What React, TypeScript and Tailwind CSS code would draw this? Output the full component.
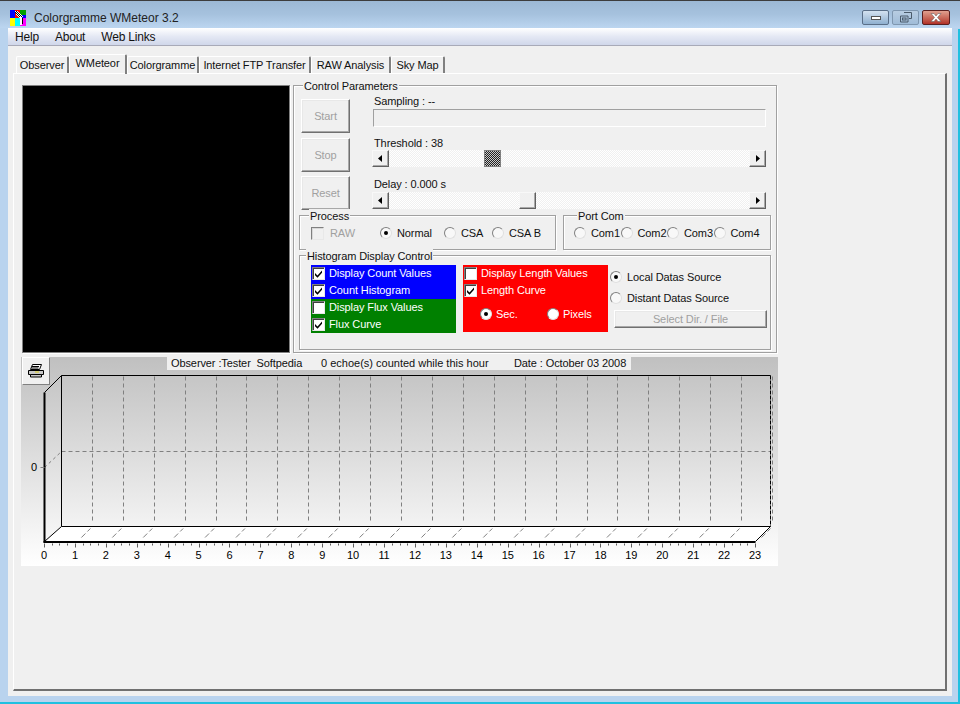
import React from "react";

const Check = ({ on, disabled, className = "" }: { on?: boolean; disabled?: boolean; className?: string }) => (
  <span className={`relative block w-[13px] h-[13px] shrink-0 border border-t-[#808080] border-l-[#808080] border-r-[#e8e8e8] border-b-[#e8e8e8] shadow-[inset_1px_1px_0_#404040] ${disabled ? "bg-[#f0f0f0] shadow-[inset_1px_1px_0_#d8d8d8]" : "bg-white"} ${className}`}>
    {on && (
      <svg viewBox="0 0 13 13" className="absolute -left-px -top-px w-[13px] h-[13px]">
        <path d="M3 6l2.500 2.500L10 3.500v2.200L5.500 10.800 3 8.300z" fill="#000" />
      </svg>
    )}
  </span>
);

const Radio = ({ on, white, className = "" }: { on?: boolean; white?: boolean; className?: string }) => (
  <span className={`relative flex items-center justify-center w-[12px] h-[12px] shrink-0 rounded-full border border-t-[#808080] border-l-[#808080] border-r-[#e0e0e0] border-b-[#e0e0e0] ${white ? "bg-white" : "bg-[#f8f8f8]"} ${className}`}>
    {on && <span className="block w-[4px] h-[4px] rounded-full bg-black" />}
  </span>
);

const Group = ({ title, legendLeft, className, children }: { title: string; legendLeft: string; className: string; children?: React.ReactNode }) => (
  <div className={`relative border border-[#a0a0a0] shadow-[inset_1px_1px_0_#fff,1px_1px_0_#fff] ${className}`}>
    <span className={`absolute -top-[7px] ${legendLeft} bg-[#f0f0f0] px-[1px] leading-[14px] text-[#111]`}>{title}</span>
    {children}
  </div>
);

const Btn3D = ({ label, className }: { label: string; className: string }) => (
  <div className={`flex items-center justify-center bg-[#f0f0f0] border border-t-white border-l-white border-r-[#707070] border-b-[#707070] shadow-[inset_-1px_-1px_0_#a8a8a8,inset_1px_1px_0_#e8e8e8] text-[#a0a0a0] ${className}`}>
    {label}
  </div>
);

const Arrow = ({ dir }: { dir: "l" | "r" }) => (
  <div className="w-[17px] h-[17px] flex items-center justify-center bg-[#f0f0f0] border border-t-[#f8f8f8] border-l-[#f8f8f8] border-r-[#606060] border-b-[#606060] shadow-[inset_-1px_-1px_0_#a8a8a8]">
    <svg viewBox="0 0 5 7" className="w-[5px] h-[7px]">
      <path d={dir === "l" ? "M4 0v7L0 3.500z" : "M1 0v7l4-3.500z"} fill="#000" />
    </svg>
  </div>
);

const Scroll = ({ pos, dark }: { pos: string; dark?: boolean }) => (
  <div className="relative flex justify-between w-[394px] h-[17px] bg-[repeating-conic-gradient(#f0f0f0_0_25%,#ffffff_0_50%)] bg-[length:2px_2px]">
    <Arrow dir="l" />
    <div className={`absolute top-0 ${pos} w-[17px] h-[17px] border ${dark ? "bg-[repeating-conic-gradient(#222222_0_25%,#c8c8c8_0_50%)] bg-[length:2px_2px] border-[#808080]" : "bg-[#f0f0f0] border-t-[#f8f8f8] border-l-[#f8f8f8] border-r-[#606060] border-b-[#606060] shadow-[inset_-1px_-1px_0_#a8a8a8]"}`} />
    <Arrow dir="r" />
  </div>
);

const Row = ({ on, label, bg }: { on?: boolean; label: string; bg: string }) => (
  <div className={`flex items-center h-[17px] pl-[1px] ${bg} text-white`}>
    <Check on={on} />
    <span className="ml-[4px]">{label}</span>
  </div>
);

const tabs = [
  { t: "Observer", w: "w-[53px]" },
  { t: "WMeteor", w: "w-[58px]" },
  { t: "Colorgramme", w: "w-[72px]" },
  { t: "Internet FTP Transfer", w: "w-[112px]" },
  { t: "RAW Analysis", w: "w-[80px]" },
  { t: "Sky Map", w: "w-[54px]" },
];

const Logo = () => (
  <svg viewBox="0 0 16 16" className="w-[16px] h-[16px] shrink-0" shapeRendering="crispEdges">
    <rect width="16" height="16" fill="#0000ff" />
    <rect x="5" y="0" width="5" height="8" fill="#ff0000" />
    <rect x="10" y="0" width="6" height="5" fill="#00a000" />
    <rect x="0" y="8" width="5" height="8" fill="#ffff00" />
    <rect x="5" y="8" width="5" height="8" fill="#00ffff" />
    <rect x="10" y="8" width="6" height="8" fill="#ff00ff" />
    {[[5, 1], [7, 1], [6, 2], [8, 2], [7, 3], [9, 3], [6, 4], [8, 4], [10, 4], [7, 5], [9, 5], [11, 5], [8, 6], [10, 6], [12, 6], [9, 7], [11, 7]].map(([x, y], i) => (
      <rect key={i} x={x} y={y} width="1" height="1" fill="#fff" />
    ))}
    {[[6, 1], [5, 2], [7, 2], [6, 3], [8, 3], [7, 4], [9, 4], [8, 5], [10, 5], [9, 6], [11, 6]].map(([x, y], i) => (
      <rect key={i} x={x} y={y} width="1" height="1" fill="#000" />
    ))}
    <rect x="10" y="7" width="2" height="8" fill="#fff" />
    <rect x="12" y="8" width="1" height="6" fill="#000" />
  </svg>
);

const Chart = () => {
  const ox = 21, oy = 357;
  const X = (x: number) => x - ox + 0.5;
  const Y = (y: number) => y - oy + 0.5;
  const step = (755 - 44) / 23;
  const hours = Array.from({ length: 24 }, (_, i) => i);
  return (
    <div className="relative w-[757px] h-[209px] bg-gradient-to-b from-[#c0c0c0] to-white">
      <svg className="absolute inset-0 w-[757px] h-[209px]" viewBox="0 0 757 209" fontFamily="'Liberation Sans', sans-serif" fontSize="11">
        <path d={`M${X(61)} ${Y(526)}H${X(770)}L${X(755)} ${Y(542)}H${X(44)}Z`} fill="#fff" />
        {hours.slice(1).map((i) => (
          <line key={i} x1={X(Math.round(61 + step * i))} x2={X(Math.round(61 + step * i))} y1={Y(376)} y2={Y(523)} stroke="#808080" strokeDasharray="4 3" />
        ))}
        <line x1={X(61)} x2={X(770)} y1={Y(451)} y2={Y(451)} stroke="#808080" strokeDasharray="4 3" />
        <line x1={X(44)} x2={X(61)} y1={Y(467)} y2={Y(451)} stroke="#808080" strokeDasharray="3 3" />
        {hours.slice(1).map((i) => (
          <g key={i}>
            <line x1={X(44 + step * i + 6)} y1={Y(537)} x2={X(44 + step * i + 10)} y2={Y(533)} stroke="#808080" />
            <line x1={X(44 + step * i + 12)} y1={Y(531)} x2={X(44 + step * i + 15)} y2={Y(528)} stroke="#808080" />
          </g>
        ))}
        <line x1={X(61)} x2={X(770)} y1={Y(375)} y2={Y(375)} stroke="#000" />
        <line x1={X(61)} x2={X(61)} y1={Y(375)} y2={Y(526)} stroke="#000" />
        <line x1={X(770)} x2={X(770)} y1={Y(375)} y2={Y(526)} stroke="#000" strokeDasharray="4 1" />
        <line x1={X(61)} x2={X(770)} y1={Y(526)} y2={Y(526)} stroke="#000" />
        <line x1={X(44)} x2={X(61)} y1={Y(392)} y2={Y(375)} stroke="#000" />
        <line x1={X(44)} x2={X(61)} y1={Y(541)} y2={Y(526)} stroke="#000" />
        <line x1={X(755)} x2={X(770)} y1={Y(541)} y2={Y(526)} stroke="#000" />
        <line x1={X(44)} x2={X(44)} y1={Y(392)} y2={Y(542)} stroke="#000" strokeWidth="2" />
        <line x1={X(43)} x2={X(755)} y1={Y(541.5)} y2={Y(541.5)} stroke="#000" strokeWidth="2" />
        <line x1={X(40)} x2={X(44)} y1={Y(467)} y2={Y(467)} stroke="#808080" />
        {hours.map((i) => (
          <g key={i}>
            <line x1={X(Math.round(44 + step * i))} x2={X(Math.round(44 + step * i))} y1={Y(543)} y2={Y(547)} stroke="#606060" />
            {i < 23 && [0.25, 0.5, 0.75].map((f) => (
              <line key={f} x1={X(Math.round(44 + step * (i + f)))} x2={X(Math.round(44 + step * (i + f)))} y1={Y(543)} y2={Y(545)} stroke="#606060" />
            ))}
            <text x={44 + step * i - ox} y={559 - oy} textAnchor="middle" fill="#000">{i}</text>
          </g>
        ))}
        <text x={34 - ox} y={471 - oy} textAnchor="middle" fill="#000">0</text>
      </svg>
      <div className="absolute left-[1px] top-0 w-[28px] h-[28px] flex items-center justify-center bg-[#f0f0f0] border border-t-white border-l-white border-r-[#808080] border-b-[#808080]">
        <svg viewBox="0 0 18 16" className="w-[18px] h-[16px]">
          <path d="M5.500 1.500h9l-2 5h-9z" fill="#fff" stroke="#000" />
          <path d="M1.500 7.500h15v4h-2v2.500h-11V11.500h-2z" fill="#c8c8c8" stroke="#000" />
          <path d="M3.500 11.500h11M5 3.500h7M4.500 5h7" stroke="#000" />
          <rect x="8" y="8.500" width="4" height="1" fill="#e0d020" />
        </svg>
      </div>
      <div className="absolute left-[146px] top-0 w-[464px] h-[13px] bg-[#f0f0f0] flex items-center pl-[4px] whitespace-pre text-[#111]">
        <span className="w-[150px]">Observer :Tester  Softpedia</span>
        <span className="w-[194px] tracking-normal">0 echoe(s) counted while this hour</span>
        <span className="-ml-[1px]">Date : October 03 2008</span>
      </div>
    </div>
  );
};

export default function App() {
  return (
    <div className="relative flex flex-col w-[960px] h-[704px] overflow-hidden bg-[#b9d3ee] font-['Liberation_Sans',sans-serif] text-[11px] tracking-[-0.1px] text-[#111] border-t border-t-[#3c3c3c]">
      {/* title bar */}
      <div className="flex items-center h-[27px] shrink-0 pt-[6px] pl-[10px] pr-[10px] bg-gradient-to-b from-[#9cb8d4] via-[#a6c2de] to-[#bcd6f0]">
        <Logo />
        <span className="ml-[8px] text-[12px] tracking-normal text-[#222]">Colorgramme WMeteor 3.2</span>
        <div className="ml-auto flex gap-[3px]">
          <div className="w-[27px] h-[15px] flex items-center justify-center rounded-[2px] border border-[#5a6f88] bg-gradient-to-b from-[#d4e2f0] to-[#8fb0d0]">
            <span className="block w-[10px] h-[4px] bg-white border border-[#555]" />
          </div>
          <div className="w-[27px] h-[15px] flex items-center justify-center rounded-[2px] border border-[#7f97b0] bg-gradient-to-b from-[#b8cde2] to-[#a0bcd8]">
            <svg viewBox="0 0 12 11" className="w-[12px] h-[11px]">
              <path d="M4 .5h7.500v6H9M.5 4h7.500v6H.5z" fill="none" stroke="#4a5a6a" />
              <rect x="2.500" y="6" width="3.500" height="2" fill="none" stroke="#4a5a6a" />
            </svg>
          </div>
          <div className="w-[28px] h-[15px] flex items-center justify-center rounded-[2px] border border-[#5a2020] bg-gradient-to-b from-[#e0a090] to-[#b03028]">
            <svg viewBox="0 0 12 9" className="w-[12px] h-[9px]">
              <path d="M1 .5h3L6 3 8 .5h3L7.500 4.500 11 8.500H8L6 6 4 8.500H1L4.500 4.500z" fill="#fff" stroke="#555" strokeWidth=".5" />
            </svg>
          </div>
        </div>
      </div>

      <div className="flex-1 flex flex-col ml-[8px] mr-[8px] mb-[8px] bg-[#f0f0f0]">
        {/* menu */}
        <div className="flex items-center h-[18px] shrink-0 pt-[1px] pl-[7px] gap-[16px] text-[12px] tracking-[-0.2px] bg-gradient-to-b from-white via-[#e4e8f4] to-[#d0d7ea] border-b border-b-[#a8aab8]">
          <span>Help</span>
          <span>About</span>
          <span>Web Links</span>
        </div>

        {/* tabs */}
        <div className="flex items-end h-[28px] shrink-0 pl-[8px]">
          {tabs.map((t, i) => (
            <div
              key={t.t}
              className={`flex items-center justify-center whitespace-nowrap border-t border-l border-t-white border-l-white border-r-2 border-r-[#808080] rounded-t-[2px] ${t.w} ${i === 1 ? "h-[20px] pb-[2px] relative z-10" : "h-[18px]"}`}
            >
              {t.t}
            </div>
          ))}
        </div>

        {/* tab page */}
        <div className="flex-1 ml-[5px] mr-[5px] mb-[5px] pl-[8px] pt-[11px] border border-t-white border-l-white border-r-2 border-b-2 border-r-[#707070] border-b-[#707070] -mt-[1px]">
          <div className="flex h-[272px]">
            <div className="w-[268px] h-[268px] bg-black border border-[#808080] shadow-[1px_1px_0_#fff]" />
            <Group title="Control Parameters" legendLeft="left-[9px]" className="ml-[3px] w-[484px] h-[268px]">
              <div className="flex pl-[7px] pt-[13px]">
                <div className="flex flex-col gap-[5px] w-[49px]">
                  <Btn3D label="Start" className="h-[34px]" />
                  <Btn3D label="Stop" className="h-[34px]" />
                  <Btn3D label="Reset" className="h-[34px] -mt-[1px]" />
                </div>
                <div className="ml-[22px] -mt-[5px] flex flex-col">
                  <span className="ml-[2px] leading-[14px] h-[15px]">Sampling : --</span>
                  <div className="ml-[1px] w-[393px] h-[18px] bg-[#f0f0f0] border border-t-[#a0a0a0] border-l-[#a0a0a0] border-r-white border-b-white" />
                  <span className="ml-[2px] mt-[9px] leading-[14px] h-[14px]">Threshold : 38</span>
                  <Scroll pos="left-[112px]" dark />
                  <span className="ml-[2px] mt-[10px] leading-[14px] h-[15px]">Delay : 0.000 s</span>
                  <Scroll pos="left-[147px]" />
                </div>
              </div>
              <div className="flex ml-[5px] mt-[5px] gap-[7px]">
                <Group title="Process" legendLeft="left-[9px]" className="w-[257px] h-[35px]">
                  <div className="flex items-center h-full pl-[11px] pt-[1px]">
                    <Check disabled />
                    <span className="ml-[6px] w-[50px] text-[#a0a0a0]">RAW</span>
                    <Radio on />
                    <span className="ml-[5px] w-[47px]">Normal</span>
                    <Radio />
                    <span className="ml-[5px] w-[31px]">CSA</span>
                    <Radio />
                    <span className="ml-[5px]">CSA B</span>
                  </div>
                </Group>
                <Group title="Port Com" legendLeft="left-[13px]" className="w-[208px] h-[35px]">
                  <div className="flex items-center h-full pl-[10px] pt-[1px]">
                    {["Com1", "Com2", "Com3", "Com4"].map((c) => (
                      <div key={c} className="flex items-center w-[46.500px]">
                        <Radio />
                        <span className="ml-[5px]">{c}</span>
                      </div>
                    ))}
                  </div>
                </Group>
              </div>
              <Group title="Histogram Display Control" legendLeft="left-[6px]" className="ml-[5px] mt-[5px] w-[472px] h-[95px]">
                <div className="flex pl-[11px] pt-[9px]">
                  <div className="w-[145px] flex flex-col">
                    <Row on label="Display Count Values" bg="bg-[#0000ff]" />
                    <Row on label="Count Histogram" bg="bg-[#0000ff]" />
                    <Row label="Display Flux Values" bg="bg-[#008000]" />
                    <Row on label="Flux Curve" bg="bg-[#008000]" />
                  </div>
                  <div className="ml-[7px] w-[145px] h-[67px] bg-[#ff0000]">
                    <Row label="Display Length Values" bg="bg-[#ff0000]" />
                    <Row on label="Length Curve" bg="bg-[#ff0000]" />
                    <div className="flex items-center mt-[7px] pl-[17px] text-white">
                      <Radio on white />
                      <span className="ml-[4px] w-[51px]">Sec.</span>
                      <Radio white />
                      <span className="ml-[4px]">Pixels</span>
                    </div>
                  </div>
                  <div className="ml-[2px] flex flex-col">
                    <div className="flex items-center h-[12px] mt-[6px]">
                      <Radio on />
                      <span className="ml-[5px]">Local Datas Source</span>
                    </div>
                    <div className="flex items-center h-[12px] mt-[9px]">
                      <Radio />
                      <span className="ml-[5px]">Distant Datas Source</span>
                    </div>
                    <Btn3D label="Select Dir. / File" className="ml-[4px] mt-[6px] w-[153px] h-[18px]" />
                  </div>
                </div>
              </Group>
            </Group>
          </div>
          <div className="-ml-[1px]">
            <Chart />
          </div>
        </div>
      </div>
      <div className="absolute right-0 top-[28px] bottom-0 w-[2px] bg-[#20c0e0]" />
      <div className="absolute left-0 right-0 bottom-0 h-[2px] bg-[#20c0e0]" />
    </div>
  );
}
